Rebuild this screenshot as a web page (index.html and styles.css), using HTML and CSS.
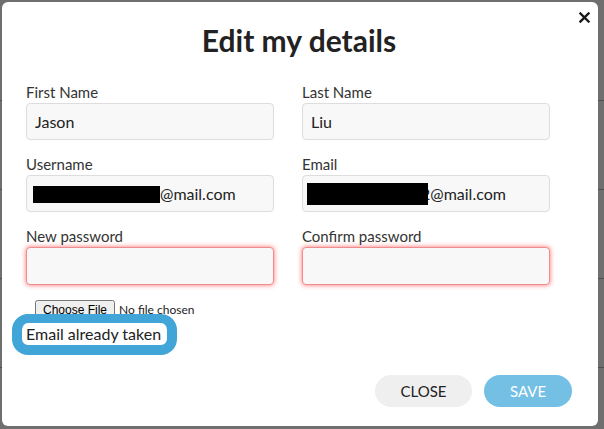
FILE: index.html
```html
<!DOCTYPE html>
<html lang="en">
<head>
  <meta charset="UTF-8">
  <meta name="viewport" content="width=device-width, initial-scale=1.0">
  <title>Edit my details</title>
  <link rel="stylesheet" href="styles.css">
</head>
<body>

  <div class="modal">
    <button class="btn-x" aria-label="Close">
      <svg width="11" height="11" viewBox="0 0 11 11"><path d="M1.5 1.5 L9.5 9.5 M9.5 1.5 L1.5 9.5" stroke="#1a1a1a" stroke-width="2.4" stroke-linecap="square"/></svg>
    </button>

    <h1>Edit my details</h1>

    <div class="campos">
      <div class="campo">
        <label>First Name</label>
        <input type="text" value="Jason">
      </div>
      <div class="campo">
        <label>Last Name</label>
        <input type="text" value="Liu">
      </div>
      <div class="campo">
        <label>Username</label>
        <div class="caixa"><span class="tarja tarja-user"></span>@mail.com</div>
      </div>
      <div class="campo">
        <label>Email</label>
        <div class="caixa"><span class="tarja tarja-email"></span>2@mail.com</div>
      </div>
      <div class="campo">
        <label>New password</label>
        <input type="password" class="erro">
      </div>
      <div class="campo">
        <label>Confirm password</label>
        <input type="password" class="erro">
      </div>
    </div>

    <input type="file" class="arquivo">
    <div class="aviso"><span>Email already taken</span></div>

    <div class="rodape">
      <button class="btn btn-close">CLOSE</button>
      <button class="btn btn-save">SAVE</button>
    </div>
  </div>

</body>
</html>
```

FILE: styles.css
```css
body {
  margin: 0;
  padding: 2px;
  height: 429px;
  box-sizing: border-box;
  font-family: Lato, "Open Sans", sans-serif;
  color: #222;
  background-color: #6f6f6f;
  background-image: linear-gradient(#4e4e4e, #4e4e4e), linear-gradient(#4e4e4e, #4e4e4e),
    linear-gradient(#4e4e4e, #4e4e4e), linear-gradient(#4e4e4e, #4e4e4e);
  background-size: 100% 1px;
  background-repeat: no-repeat;
  background-position: 0 100px, 0 189px, 0 278px, 0 367px;
  overflow: hidden;
}
.modal {
  position: relative;
  width: 596px;
  height: 424px;
  box-sizing: border-box;
  background: #fff;
  border-radius: 6px;
  padding: 20px 26px 19px 24px;
  display: flex;
  flex-direction: column;
}
.btn-x {
  position: absolute;
  top: 10px;
  right: 8px;
  border: none;
  background: none;
  padding: 0;
  width: 11px;
  height: 11px;
  cursor: pointer;
}
.btn-x svg { display: block; }
h1 {
  margin: 0 0 25px;
  font-size: 30px;
  line-height: 36px;
  font-weight: 700;
  text-align: center;
  color: #222;
}
.campos {
  display: grid;
  grid-template-columns: 248px 248px;
  column-gap: 28px;
  row-gap: 15px;
}
.campo label {
  display: block;
  font-size: 15px;
  line-height: 19px;
  margin-bottom: 1px;
  color: #333;
}
.campo input, .caixa {
  display: block;
  width: 100%;
  height: 37px;
  box-sizing: border-box;
  border: 1px solid #ddd;
  border-radius: 4px;
  background: #f8f8f8;
  padding: 0 8px;
  font-family: Lato, sans-serif;
  font-size: 16px;
  color: #222;
  outline: none;
}
.caixa {
  display: flex;
  align-items: center;
}
.tarja {
  position: relative;
  z-index: 1;
  display: inline-block;
  background: #000;
}
.tarja-user {
  width: 127px;
  height: 17px;
  margin: 2px 0 0 -2px;
}
.tarja-email {
  width: 121px;
  height: 22px;
  margin: 0 -7px 0 -4px;
}
.campo input.erro {
  height: 38px;
  border-color: #f28c8c;
  box-shadow: 0 0 5px rgba(255, 60, 60, 0.75);
}
.arquivo {
  margin: 15px 0 0 9px;
  font-family: Lato, sans-serif;
  font-size: 12px;
  color: #222;
  height: 21px;
}
.aviso {
  position: relative;
  align-self: flex-start;
  margin: -7px 0 0 -14px;
  border: 10px solid #42a5d8;
  border-top-width: 9px;
  border-radius: 16px;
  background: #fff;
  padding: 0 6px 0 4px;
  font-size: 16px;
  line-height: 22px;
  color: #222;
}
.rodape {
  margin-top: auto;
  display: flex;
  justify-content: flex-end;
  gap: 12px;
}
.btn {
  height: 32px;
  padding: 0;
  border: none;
  border-radius: 16px;
  font-family: Lato, sans-serif;
  font-size: 15px;
  cursor: pointer;
}
.btn-close {
  width: 97px;
  background: #efefef;
  color: #222;
}
.btn-save {
  width: 88px;
  background: #74c0e5;
  color: #fff;
}
```
